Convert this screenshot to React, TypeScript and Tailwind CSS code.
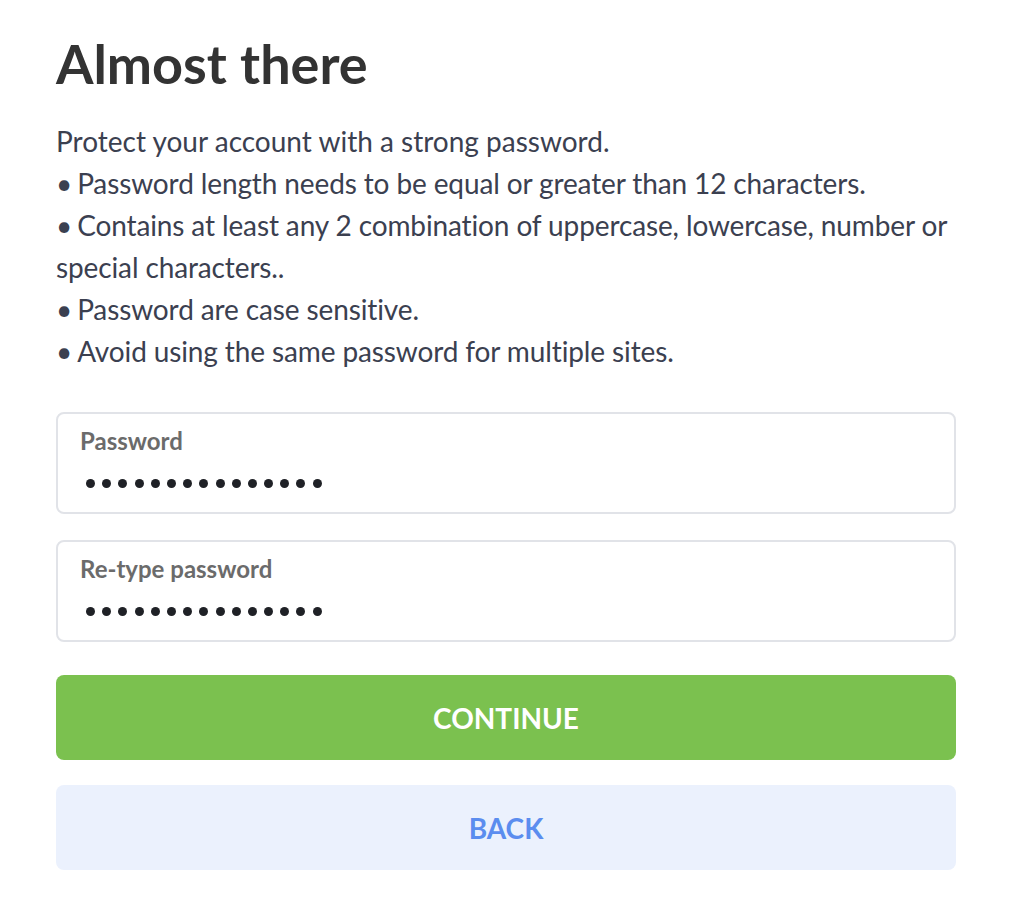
import React from 'react'

/**
 * パスワード入力欄
 */
const PasswordField = ({ label, value }: { label: string; value: string }) => {
  return (
    <div className="h-[102px] rounded-lg border-2 border-[#e1e3e8] bg-white px-[22px] pt-[13px]">
      <p className="text-[24px] leading-[28px] font-bold text-[#6b6b6b]">{label}</p>
      {/* 伏せ字のドット */}
      <div className="mt-[24px] ml-[6px] flex gap-[7.2px]">
        {value.split('').map((_, i) => (
          <span key={i} className="h-[9px] w-[9px] rounded-full bg-[#1f2126]" />
        ))}
      </div>
    </div>
  )
}

export default function App() {
  // ルール一覧
  const rules = [
    'Password length needs to be equal or greater than 12 characters.',
    'Contains at least any 2 combination of uppercase, lowercase, number or special characters..',
    'Password are case sensitive.',
    'Avoid using the same password for multiple sites.',
  ]

  return (
    <div className="min-h-[922px] bg-white font-['Lato','Noto_Sans',sans-serif]">
      <div className="mx-[56px] w-[900px] pt-[28px]">
        <h1 className="text-[54px] leading-[72px] font-bold text-[#333333]">Almost there</h1>
        <div className="mt-[20px] text-[28px] leading-[42px] text-[#3b4050]">
          <p>Protect your account with a strong password.</p>
          {rules.map((v) => (
            <p key={v} className="tracking-[-0.12px]">
              <span className="mr-[5px]">•</span>
              {v}
            </p>
          ))}
        </div>
        <div className="mt-[40px] flex flex-col gap-[26px]">
          <PasswordField label="Password" value="abcdefghijklmno" />
          <PasswordField label="Re-type password" value="abcdefghijklmno" />
        </div>
        <div className="mt-[33px] flex flex-col gap-[25px]">
          <button className="h-[85px] w-full rounded-lg bg-[#7bc14f] text-[28px] font-bold text-white">CONTINUE</button>
          <button className="h-[85px] w-full rounded-lg bg-[#ebf1fd] text-[28px] font-bold text-[#5b8def]">BACK</button>
        </div>
      </div>
    </div>
  )
}
